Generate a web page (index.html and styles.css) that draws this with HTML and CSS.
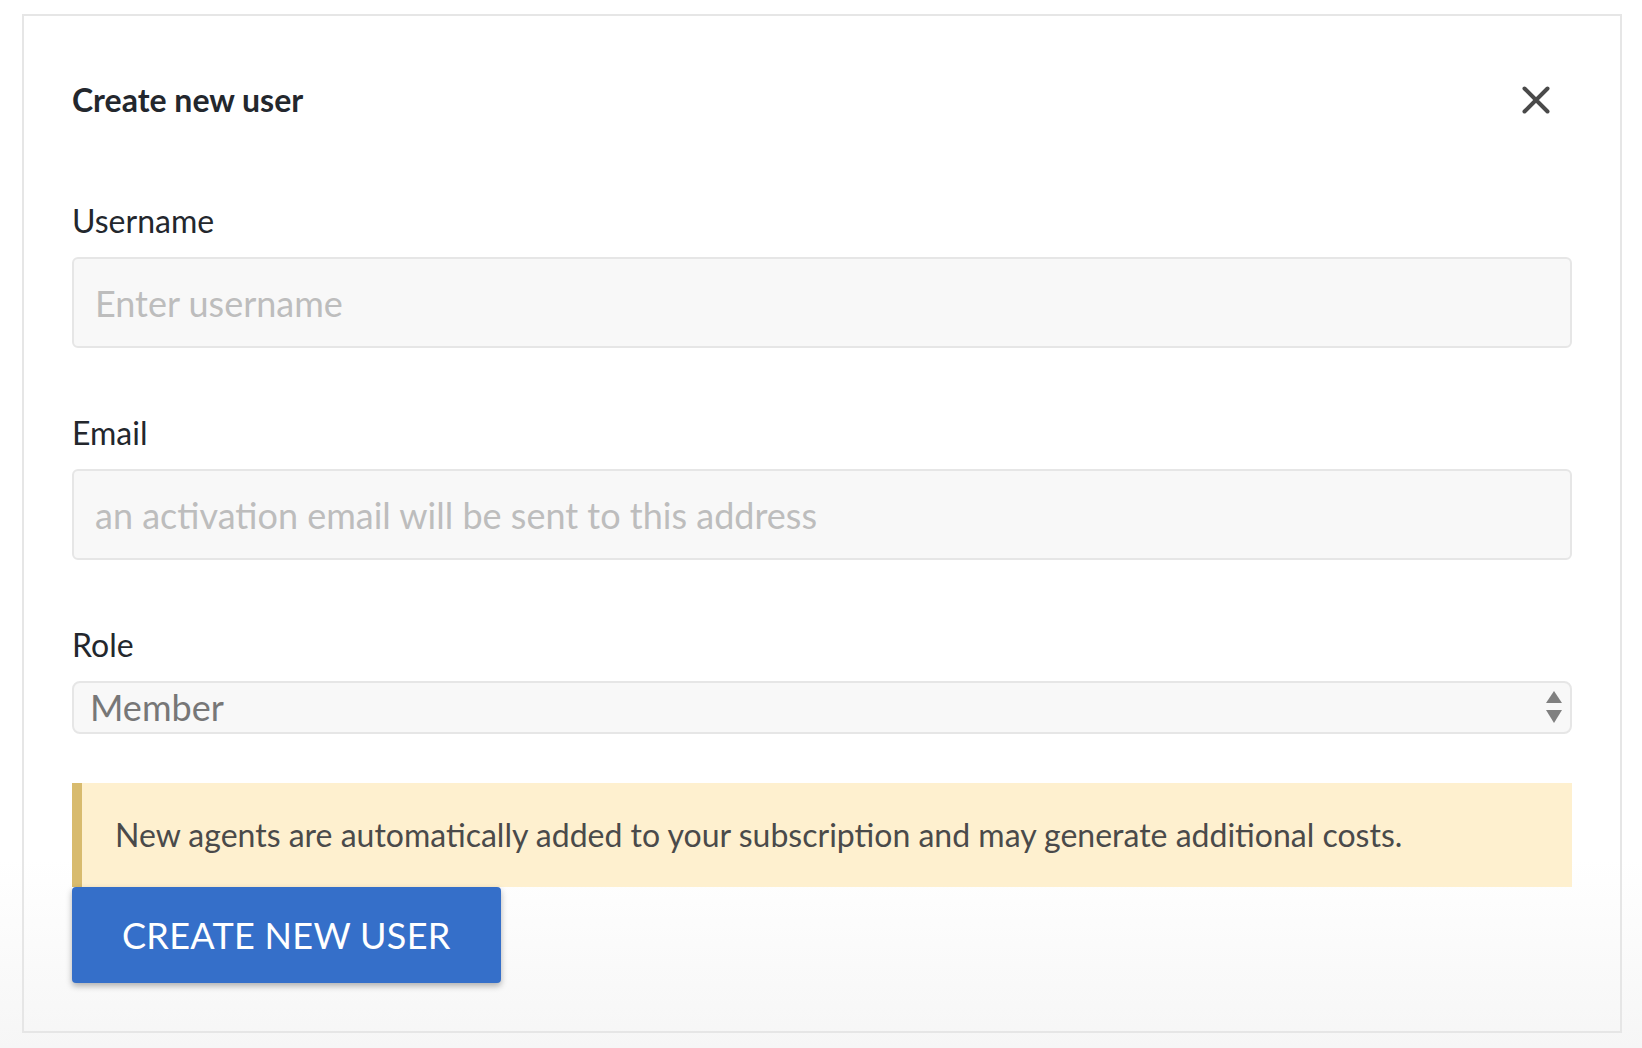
FILE: index.html
```html
<!DOCTYPE html>
<html lang="en">
<head>
  <meta charset="UTF-8">
  <meta name="viewport" content="width=device-width, initial-scale=1.0">
  <title>Create new user</title>
  <link rel="stylesheet" href="styles.css">
</head>
<body>
  <div class="modal">
    <div class="modal-header">
      <h1>Create new user</h1>
      <button class="close-button" aria-label="Close">
        <svg width="28" height="28" viewBox="0 0 28 28">
          <path d="M2.5 2.5 L25.5 25.5 M25.5 2.5 L2.5 25.5" stroke="#4a4a4a" stroke-width="4" stroke-linecap="round" fill="none"/>
        </svg>
      </button>
    </div>

    <form class="user-form">
      <div class="field">
        <label for="username">Username</label>
        <input type="text" id="username" class="input-field" placeholder="Enter username">
      </div>

      <div class="field">
        <label for="email">Email</label>
        <input type="email" id="email" class="input-field" placeholder="an activation email will be sent to this address">
      </div>

      <div class="field field-last">
        <label for="role">Role</label>
        <div class="select-wrap">
          <select id="role" class="select-field">
            <option>Member</option>
            <option>Admin</option>
          </select>
          <svg class="select-arrows" width="16" height="32" viewBox="0 0 16 32">
            <path d="M8 0 L16 12 L0 12 Z" fill="#808080"/>
            <path d="M0 19 L16 19 L8 32 Z" fill="#808080"/>
          </svg>
        </div>
      </div>

      <div class="notice">New agents are automatically added to your subscription and may generate additional costs.</div>
      <button type="button" class="btn">CREATE NEW USER</button>
    </form>
  </div>
</body>
</html>
```

FILE: styles.css
```css
body {
  margin: 0;
  font-family: Lato, "Open Sans", sans-serif;
  background: linear-gradient(to bottom, #ffffff 82%, #f6f6f6 100%);
  min-height: 1048px;
  color: #23272d;
}
.modal {
  box-sizing: border-box;
  width: 1600px;
  margin: 14px 0 0 22px;
  padding: 65px 48px 48px;
  border: 2px solid #e6e6e6;
}
.modal-header {
  display: flex;
  justify-content: space-between;
  align-items: center;
  margin-bottom: 83px;
}
.modal-header h1 {
  margin: 0;
  font-size: 32px;
  line-height: 38px;
  font-weight: bold;
}
.close-button {
  border: none;
  background: none;
  padding: 0;
  margin-right: 22px;
  width: 28px;
  height: 28px;
  cursor: pointer;
}
.field {
  margin-bottom: 66px;
}
.field-last {
  margin-bottom: 49px;
}
.field label {
  display: block;
  font-size: 32px;
  line-height: 38px;
  margin-bottom: 17px;
}
.input-field {
  box-sizing: border-box;
  display: block;
  width: 100%;
  height: 91px;
  padding: 0 21px;
  font-family: inherit;
  font-size: 36px;
  color: #333;
  background-color: #f8f8f8;
  border: 2px solid #e6e6e6;
  border-radius: 6px;
  outline: none;
}
.input-field::placeholder {
  color: #bdbdbd;
}
.select-wrap {
  position: relative;
}
.select-field {
  box-sizing: border-box;
  display: block;
  width: 100%;
  height: 53px;
  padding: 0 16px;
  font-family: inherit;
  font-size: 36px;
  line-height: 49px;
  color: #777;
  background-color: #f8f8f8;
  border: 2px solid #e6e6e6;
  border-radius: 8px;
  appearance: none;
  -webkit-appearance: none;
  outline: none;
}
.select-arrows {
  position: absolute;
  right: 10px;
  top: 10px;
  pointer-events: none;
}
.notice {
  padding: 33px 33px;
  font-size: 32px;
  line-height: 38px;
  color: #4a4a4a;
  background-color: #fef0cf;
  border-left: 10px solid #d8bb6e;
}
.btn {
  height: 96px;
  padding: 0 50px;
  font-family: inherit;
  font-size: 36px;
  letter-spacing: 0.3px;
  color: #fff;
  background-color: #356fc9;
  border: none;
  border-radius: 4px;
  box-shadow: 0 3px 6px rgba(0, 0, 0, 0.3);
  cursor: pointer;
}
```
